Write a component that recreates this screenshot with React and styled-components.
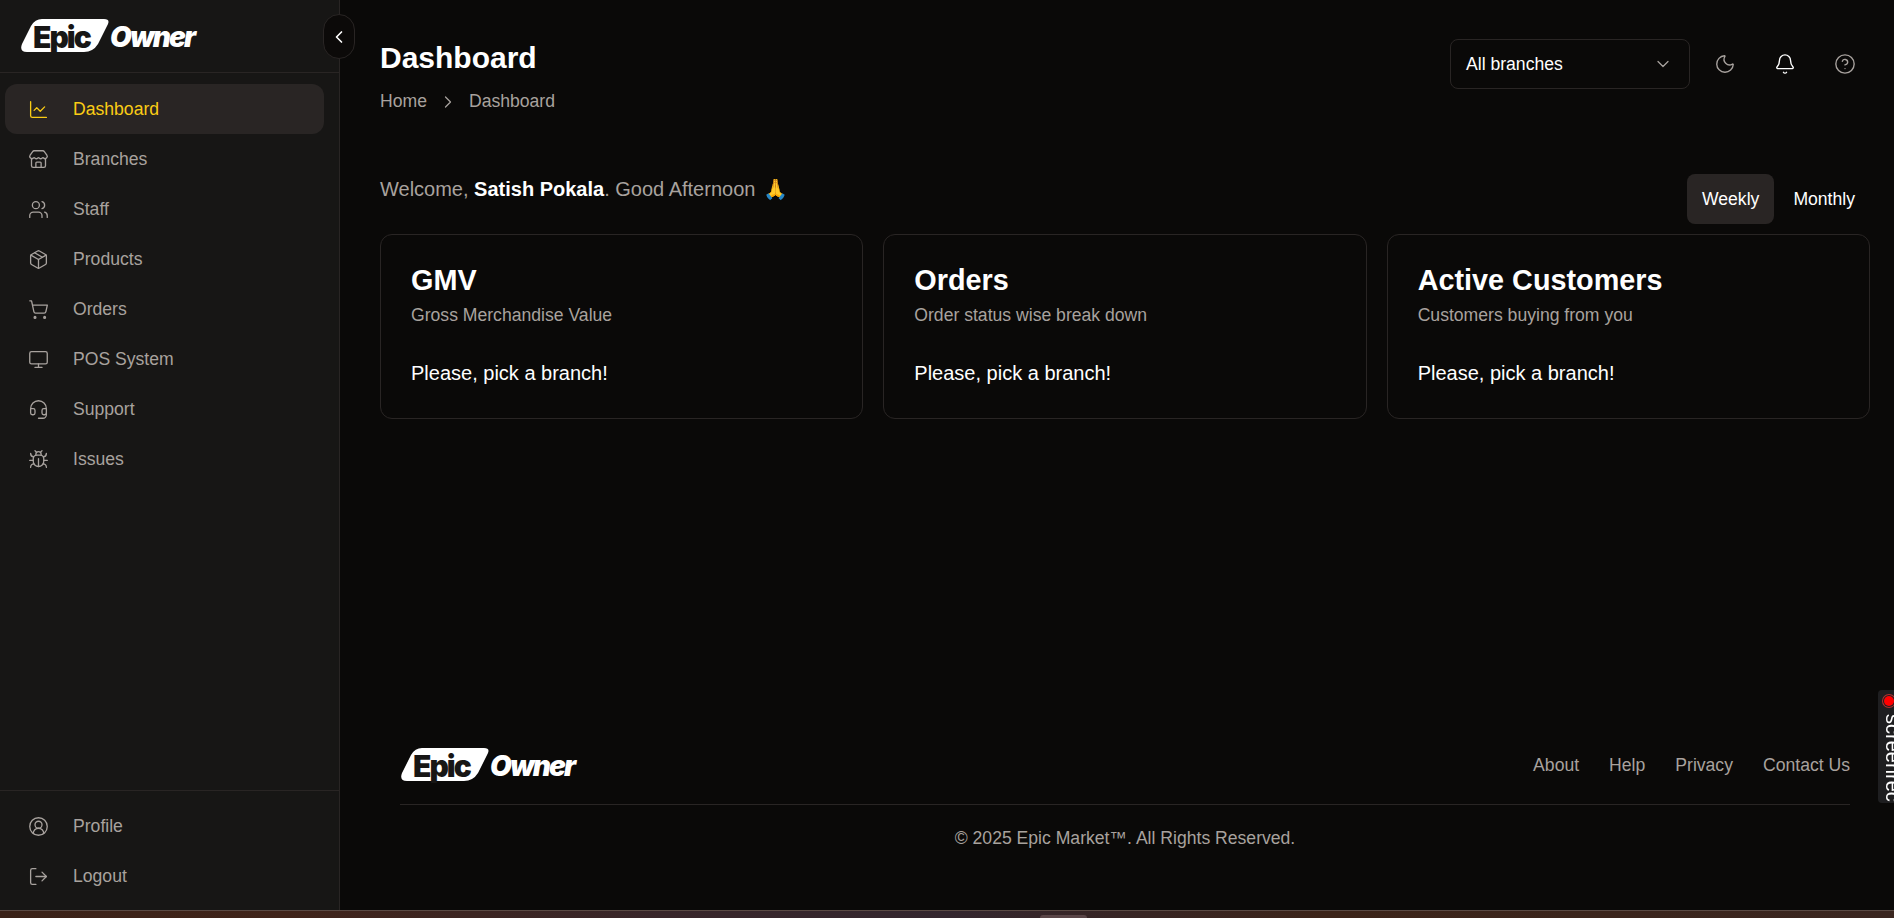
import styled, { createGlobalStyle } from "styled-components";
import {
  ChartLine,
  Store,
  Users,
  Package,
  ShoppingCart,
  Monitor,
  Headset,
  Bug,
  CircleUserRound,
  LogOut,
  ChevronLeft,
  ChevronRight,
  ChevronDown,
  Moon,
  Bell,
  CircleHelp,
} from "lucide-react";

const GlobalStyle = createGlobalStyle`
  html, body {
    margin: 0;
    padding: 0;
    height: 100%;
    background: #0a0908;
    font-family: "Liberation Sans", Arial, sans-serif;
    overflow: hidden;
  }
`;

const Page = styled.div`
  height: 918px;
  display: flex;
  flex-direction: column;
`;

const Shell = styled.div`
  flex: 1;
  min-height: 0;
  display: flex;
`;

const Taskbar = styled.div`
  height: 7px;
  position: relative;
  background: linear-gradient(90deg, #3a2218 0%, #40241a 15%, #38262a 35%, #33262e 50%, #3c2419 70%, #3a2620 100%);
  border-top: 1px solid #5a4a44;
`;

const TaskbarTab = styled.span`
  position: absolute;
  left: 1040px;
  bottom: 0;
  width: 47px;
  height: 3px;
  border-radius: 4px 4px 0 0;
  background: #5a4648;
`;

const Sidebar = styled.aside`
  width: 339px;
  flex-shrink: 0;
  background: #171615;
  border-right: 1px solid #292524;
  display: flex;
  flex-direction: column;
  position: relative;
`;

const SidebarHead = styled.div`
  height: 73px;
  border-bottom: 1px solid #292524;
  padding: 18px 0 0 20px;
  box-sizing: border-box;
`;

const Collapse = styled.button`
  position: absolute;
  left: 323px;
  top: 14px;
  width: 32px;
  height: 45px;
  padding: 0;
  border-radius: 16px;
  border: 1px solid #292524;
  background: #0c0a09;
  color: #fff;
  display: flex;
  align-items: center;
  justify-content: center;
`;

const Nav = styled.nav`
  flex: 1;
  padding: 11px 15px 0 5px;
  display: flex;
  flex-direction: column;
`;

const BottomNav = styled.nav`
  border-top: 1px solid #292524;
  padding: 10px 15px 9px 5px;
  display: flex;
  flex-direction: column;
`;

const NavItem = styled.a`
  height: 50px;
  display: flex;
  align-items: center;
  gap: 24px;
  padding-left: 23px;
  border-radius: 12px;
  font-size: 17.6px;
  color: ${(p) => (p.$active ? "#facc15" : "#a8a29e")};
  background: ${(p) => (p.$active ? "#292524" : "transparent")};
`;

const Main = styled.main`
  flex: 1;
  min-width: 0;
  display: flex;
  flex-direction: column;
  padding: 0 24px 0 40px;
`;

const Header = styled.header`
  display: flex;
  justify-content: space-between;
  align-items: flex-start;
  padding-top: 40px;
  height: 134px;
  box-sizing: border-box;
`;

const Title = styled.h1`
  margin: 0;
  font-size: 30px;
  line-height: 36px;
  font-weight: 700;
  color: #fff;
`;

const Crumbs = styled.div`
  display: flex;
  align-items: center;
  gap: 11px;
  margin-top: 15px;
  font-size: 17.6px;
  color: #a8a29e;
`;

const HeaderTools = styled.div`
  display: flex;
  align-items: center;
  margin: -1px -5px 0 0;
`;

const BranchSelect = styled.div`
  width: 240px;
  height: 50px;
  box-sizing: border-box;
  margin-right: 5px;
  border: 1px solid #292524;
  border-radius: 8px;
  padding: 0 16px 0 15px;
  display: flex;
  align-items: center;
  justify-content: space-between;
  font-size: 17.6px;
  color: #fff;
`;

const ToolButton = styled.button`
  width: 60px;
  height: 50px;
  padding: 0;
  background: none;
  border: 0;
  display: flex;
  align-items: center;
  justify-content: center;
  color: ${(p) => (p.$bright ? "#fff" : "#a8a29e")};
`;

const WelcomeRow = styled.div`
  display: flex;
  justify-content: space-between;
  align-items: flex-start;
  margin-top: 40px;
`;

const Welcome = styled.div`
  padding-top: 1px;
  font-size: 20px;
  line-height: 28px;
  color: #a8a29e;

  strong {
    color: #fff;
  }
`;

const Emoji = styled.span`
  margin-left: 2px;
`;

const Tabs = styled.div`
  display: flex;
  gap: 4px;
`;

const Tab = styled.button`
  height: 50px;
  padding: 0 15px;
  border: 0;
  border-radius: 8px;
  font: inherit;
  font-size: 17.6px;
  color: #fff;
  background: ${(p) => (p.$active ? "#292524" : "transparent")};
`;

const Cards = styled.section`
  display: grid;
  grid-template-columns: repeat(3, 1fr);
  gap: 20px;
  margin-top: 10px;
`;

const Card = styled.article`
  height: 185px;
  box-sizing: border-box;
  border: 1px solid #292524;
  border-radius: 12px;
  padding: 27px 30px 0;
`;

const CardTitle = styled.h2`
  margin: 0;
  font-size: 28.8px;
  line-height: 36px;
  font-weight: 700;
  color: #fff;
`;

const CardSub = styled.p`
  margin: 3px 0 0;
  font-size: 17.6px;
  line-height: 28px;
  color: #a8a29e;
`;

const CardNote = styled.p`
  margin: 30px 0 0;
  font-size: 20px;
  line-height: 28px;
  color: #fff;
`;

const Footer = styled.footer`
  margin-top: auto;
  padding: 0 20px 58px;
`;

const FooterTop = styled.div`
  display: flex;
  justify-content: space-between;
  align-items: center;
  height: 78px;
  border-bottom: 1px solid #292524;
`;

const FooterLinks = styled.div`
  display: flex;
  gap: 30px;
  font-size: 17.6px;
  color: #a8a29e;
`;

const Copyright = styled.div`
  margin-top: 19px;
  text-align: center;
  font-size: 17.6px;
  line-height: 28px;
  color: #a8a29e;
`;

const RecWidget = styled.div`
  position: fixed;
  right: 0;
  top: 690px;
  width: 16px;
  height: 113px;
  overflow: hidden;
  background: #1e1e20;
  border-radius: 4px 0 0 4px;
`;

const RecDot = styled.span`
  position: absolute;
  left: 6px;
  top: 6px;
  width: 10px;
  height: 10px;
  border-radius: 50%;
  background: #ff0000;
  box-shadow: 0 0 0 1px #1e1e20, 0 0 0 2px #b03030;
`;

const RecLabel = styled.span`
  position: absolute;
  left: 5px;
  top: 24px;
  writing-mode: vertical-rl;
  font-size: 20px;
  line-height: 20px;
  color: #fff;
  white-space: nowrap;
`;

const LogoMark = styled.svg`
  display: block;
`;

const Logo = () => (
  <LogoMark width="182" height="36" viewBox="0 0 182 36">
    <path
      d="M20 1 H84 Q90 1 88 6 L78 26 Q73 34 64 34 H7 Q-1 34 2 26 L11 8 Q15 1 22 1 Z"
      fill="#fff"
    />
    <text
      x="13"
      y="30"
      fontFamily="Inter, 'Liberation Sans', sans-serif"
      fontSize="30"
      fontWeight="900"
      letterSpacing="-2"
      fill="#171615"
    >
      Epic
    </text>
    <text
      x="90"
      y="29"
      fontFamily="Inter, 'Liberation Sans', sans-serif"
      fontSize="28"
      fontStyle="italic"
      fontWeight="900"
      letterSpacing="-1.8"
      fill="#fff"
    >
      Owner
    </text>
  </LogoMark>
);

const mainNav = [
  { label: "Dashboard", icon: ChartLine, active: true },
  { label: "Branches", icon: Store },
  { label: "Staff", icon: Users },
  { label: "Products", icon: Package },
  { label: "Orders", icon: ShoppingCart },
  { label: "POS System", icon: Monitor },
  { label: "Support", icon: Headset },
  { label: "Issues", icon: Bug },
];

const bottomNav = [
  { label: "Profile", icon: CircleUserRound },
  { label: "Logout", icon: LogOut },
];

const cards = [
  { title: "GMV", sub: "Gross Merchandise Value" },
  { title: "Orders", sub: "Order status wise break down" },
  { title: "Active Customers", sub: "Customers buying from you" },
];

const App = () => {
  const renderItem = ({ label, icon: Icon, active }) => (
    <NavItem key={label} $active={active}>
      <Icon size={21} strokeWidth={1.5} />
      {label}
    </NavItem>
  );

  return (
    <Page>
      <GlobalStyle />
      <Shell>
        <Sidebar>
          <SidebarHead>
            <Logo />
          </SidebarHead>
          <Collapse>
            <ChevronLeft size={20} strokeWidth={2} />
          </Collapse>
          <Nav>{mainNav.map(renderItem)}</Nav>
          <BottomNav>{bottomNav.map(renderItem)}</BottomNav>
        </Sidebar>
        <Main>
          <Header>
            <div>
              <Title>Dashboard</Title>
              <Crumbs>
                Home
                <ChevronRight size={20} strokeWidth={1.5} />
                Dashboard
              </Crumbs>
            </div>
            <HeaderTools>
              <BranchSelect>
                All branches
                <ChevronDown size={20} strokeWidth={1.5} color="#a8a29e" />
              </BranchSelect>
              <ToolButton>
                <Moon size={22} strokeWidth={1.5} />
              </ToolButton>
              <ToolButton $bright>
                <Bell size={22} strokeWidth={1.5} />
              </ToolButton>
              <ToolButton>
                <CircleHelp size={22} strokeWidth={1.5} />
              </ToolButton>
            </HeaderTools>
          </Header>
          <WelcomeRow>
            <Welcome>
              Welcome, <strong>Satish Pokala</strong>. Good Afternoon <Emoji>🙏</Emoji>
            </Welcome>
            <Tabs>
              <Tab $active>Weekly</Tab>
              <Tab>Monthly</Tab>
            </Tabs>
          </WelcomeRow>
          <Cards>
            {cards.map((c) => (
              <Card key={c.title}>
                <CardTitle>{c.title}</CardTitle>
                <CardSub>{c.sub}</CardSub>
                <CardNote>Please, pick a branch!</CardNote>
              </Card>
            ))}
          </Cards>
          <Footer>
            <FooterTop>
              <Logo />
              <FooterLinks>
                <span>About</span>
                <span>Help</span>
                <span>Privacy</span>
                <span>Contact Us</span>
              </FooterLinks>
            </FooterTop>
            <Copyright>© 2025 Epic Market™. All Rights Reserved.</Copyright>
          </Footer>
        </Main>
      </Shell>
      <Taskbar>
        <TaskbarTab />
      </Taskbar>
      <RecWidget>
        <RecDot />
        <RecLabel>screenrec</RecLabel>
      </RecWidget>
    </Page>
  );
};

export default App;
